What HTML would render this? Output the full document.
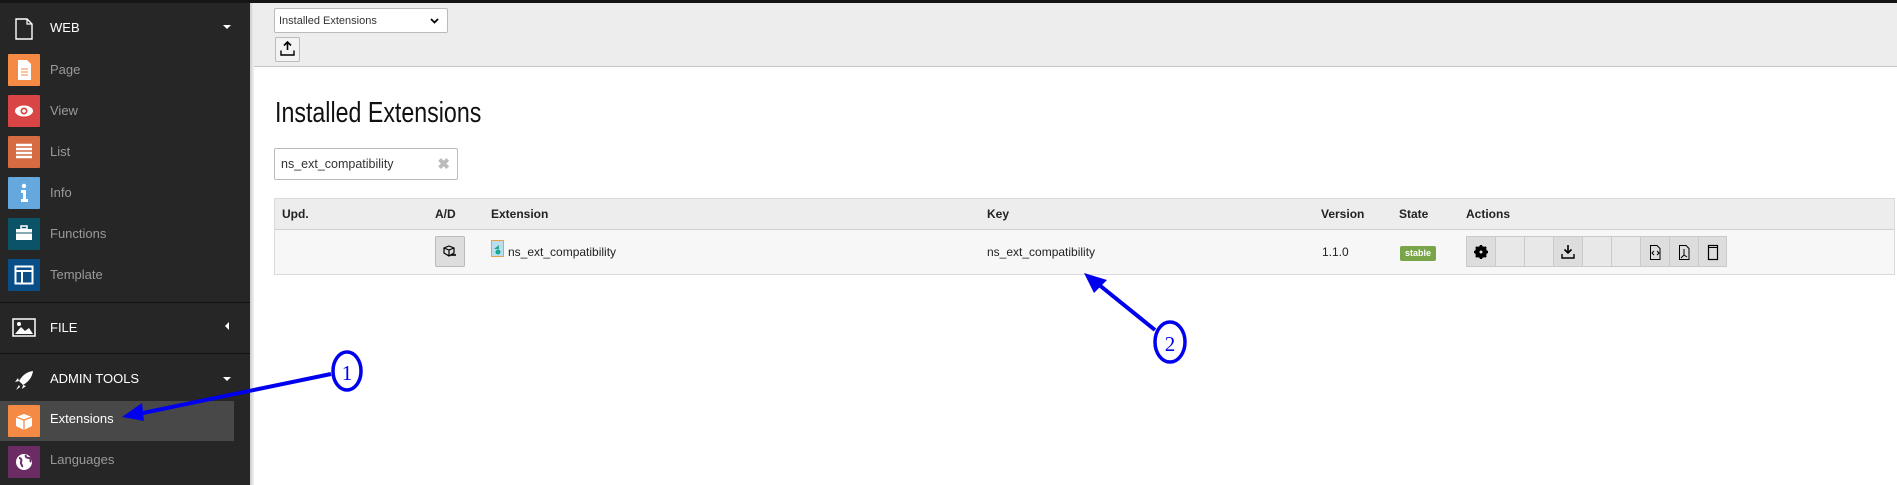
<!DOCTYPE html>
<html><head><meta charset="utf-8"><style>
*{margin:0;padding:0;box-sizing:border-box}
body{width:1897px;height:485px;overflow:hidden;background:#fff;font-family:"Liberation Sans",sans-serif;position:relative}
.abs{position:absolute}
#top{left:0;top:0;width:1897px;height:3px;background:#151515}
#side{left:0;top:3px;width:250px;height:482px;background:#262626}
.hdr{position:absolute;left:50px;color:#fff;font-size:13px}
.ico{position:absolute;left:8px;width:32px;height:32px;border-radius:1px}
.lab{position:absolute;left:50px;color:#9a9a9a;font-size:13px}
.sep{position:absolute;left:0;width:250px;height:1px;background:#111}
.tri{position:absolute;left:223px;width:0;height:0;border-left:4px solid transparent;border-right:4px solid transparent;border-top:4px solid #fff}
#doc{left:250px;top:3px;width:1647px;height:64px;background:#ededed;border-bottom:1px solid #c5c5c5}
#shadow{left:250px;top:3px;width:4px;height:482px;background:linear-gradient(to right,#ccc,#f2f2f2)}
.b{position:absolute;top:236px;height:31px;width:29px;border:1px solid #cacaca;border-right:none}
</style></head><body>
<div class="abs" id="top"></div>
<div class="abs" id="side">
 <svg style="position:absolute;left:14px;top:15px" width="20" height="22" viewBox="0 0 20 22"><path d="M2 1H13L18 6V21H2Z" fill="none" stroke="#fff" stroke-width="1.4"/><path d="M13 1V6H18" fill="none" stroke="#fff" stroke-width="1.2"/></svg>
 <div class="hdr" style="top:17px">WEB</div><div class="tri" style="top:22px"></div>
 <div class="ico" style="top:51px;background:#f58a45"><svg width="32" height="32"><path d="M10 6H19L23 10V26H10Z" fill="#fff"/><path d="M13 15h7M13 18h7M13 21h7" stroke="#f58a45"/></svg></div>
 <div class="lab" style="top:59px">Page</div>
 <div class="ico" style="top:92px;background:#d94545"><svg width="32" height="32"><ellipse cx="16" cy="16" rx="9" ry="5.5" fill="#fff"/><circle cx="16" cy="16" r="3.5" fill="#d94545"/><circle cx="16" cy="16" r="1.8" fill="#fff"/></svg></div>
 <div class="lab" style="top:100px">View</div>
 <div class="ico" style="top:133px;background:#d66b42"><svg width="32" height="32"><path d="M8 9h16M8 13h16M8 17h16M8 21h16" stroke="#fff" stroke-width="2.4"/></svg></div>
 <div class="lab" style="top:141px">List</div>
 <div class="ico" style="top:174px;background:#64a8dd"><svg width="32" height="32"><circle cx="16" cy="9" r="2.2" fill="#fff"/><path d="M13 13h5v9h2v3h-7v-3h2v-6h-2z" fill="#fff"/></svg></div>
 <div class="lab" style="top:182px">Info</div>
 <div class="ico" style="top:215px;background:#0b5366"><svg width="32" height="32"><rect x="8" y="11" width="16" height="11" fill="#fff"/><rect x="13" y="8" width="6" height="3" fill="none" stroke="#fff" stroke-width="1.5"/><path d="M8 15h16" stroke="#0b5366"/></svg></div>
 <div class="lab" style="top:223px">Functions</div>
 <div class="ico" style="top:256px;background:#0a4e87"><svg width="32" height="32"><rect x="7.5" y="7.5" width="17" height="17" fill="none" stroke="#fff" stroke-width="2"/><path d="M8 12h16M14 12v12" stroke="#fff" stroke-width="2"/></svg></div>
 <div class="lab" style="top:264px">Template</div>
 <div class="sep" style="top:299px"></div>
 <svg style="position:absolute;left:12px;top:315px" width="24" height="20"><rect x="1" y="1" width="22" height="17" fill="none" stroke="#fff" stroke-width="1.5"/><path d="M3 16L9 9L13 13L17 10L21 16Z" fill="#fff"/><circle cx="7" cy="6" r="2" fill="#fff"/></svg>
 <div class="hdr" style="top:317px">FILE</div>
 <div style="position:absolute;left:225px;top:319px;border-top:4px solid transparent;border-bottom:4px solid transparent;border-right:4px solid #fff"></div>
 <div class="sep" style="top:350px"></div>
 <svg style="position:absolute;left:14px;top:367px" width="20" height="22" viewBox="0 0 20 22"><path d="M19 1C12 2 8 6 5 11L9 15C14 12 18 8 19 1Z M5 11L1 12L4 8Z M9 15L8 19L12 16Z M5 15L2 20L6 17Z" fill="#fff"/></svg>
 <div class="hdr" style="top:368px">ADMIN TOOLS</div><div class="tri" style="top:374px"></div>
 <div style="position:absolute;left:0;top:398px;width:234px;height:40px;background:#484848"></div>
 <div class="ico" style="top:402px;background:#f58a45"><svg width="32" height="32"><path d="M16 9L24 12V21L16 25L8 21V12Z" fill="#fff"/><path d="M8 12L16 15L24 12M16 15V25" stroke="#f58a45" stroke-width="1.3" fill="none"/></svg></div>
 <div class="hdr" style="top:408px">Extensions</div>
 <div class="ico" style="top:443px;background:#6a2c63"><svg width="32" height="32"><circle cx="16" cy="16" r="8" fill="#fff"/><path d="M11 12c2 0 3 2 2 4s2 3 1 5M18 9c-1 2 1 3 3 3s2 3 1 4" stroke="#6a2c63" stroke-width="2" fill="none"/></svg></div>
 <div class="lab" style="top:449px">Languages</div>
</div>
<div class="abs" id="doc">
 <div style="position:absolute;left:24px;top:5px;width:174px;height:25px;background:#fff;border:1px solid #bbb;border-radius:2px;font-size:11px;color:#333;padding:6px 4px">Installed Extensions
  <svg style="position:absolute;right:8px;top:9px" width="9" height="6"><path d="M1 1L4.5 4.5L8 1" stroke="#000" stroke-width="1.8" fill="none"/></svg></div>
 <div style="position:absolute;left:25px;top:34px;width:25px;height:25px;background:#f3f3f3;border:1px solid #bbb;border-radius:2px">
  <svg width="23" height="23"><path d="M11.5 4V12M8 7.5L11.5 4L15 7.5" stroke="#000" stroke-width="1.6" fill="none"/><path d="M5 12.5V17H18V12.5" stroke="#000" stroke-width="1.4" fill="none"/></svg></div>
</div>
<div class="abs" id="shadow"></div>
<div class="abs" style="left:275px;top:97px;font-size:29px;color:#111;transform:scaleX(0.8);transform-origin:left;white-space:nowrap">Installed Extensions</div>
<div class="abs" style="left:274px;top:148px;width:184px;height:32px;border:1px solid #bbb;border-radius:2px;font-size:12.5px;color:#333;padding:8px 6px">ns_ext_compatibility<span style="position:absolute;right:7px;top:6px;color:#bbb;font-size:15px;font-weight:bold">✖</span></div>
<div class="abs" style="left:274px;top:198px;width:1621px;height:77px;border:1px solid #dadada;background:#f7f7f7">
 <div style="position:absolute;left:0;top:0;width:100%;height:31px;background:#ededed;border-bottom:1px solid #d0d0d0"></div>
 <div style="position:absolute;top:8px;left:0;font-size:12px;font-weight:bold;color:#222">
  <span class="abs" style="left:7px">Upd.</span><span class="abs" style="left:160px">A/D</span><span class="abs" style="left:216px">Extension</span><span class="abs" style="left:712px">Key</span><span class="abs" style="left:1046px">Version</span><span class="abs" style="left:1124px">State</span><span class="abs" style="left:1191px">Actions</span></div>
 <div style="position:absolute;left:160px;top:37px;width:30px;height:31px;background:#ddd;border:1px solid #bbb;border-radius:2px"><svg width="28" height="29"><path d="M13 9L18 11V16L13 19L8 16V11Z M8 11L13 13L18 11M13 13V19" stroke="#000" stroke-width="1.2" fill="none"/><path d="M15 18h5" stroke="#000" stroke-width="1.6"/></svg></div>
 <svg style="position:absolute;left:216px;top:41px" width="13" height="17"><rect x="0.5" y="0.5" width="12" height="16" fill="#bde" stroke="#e8a050"/><path d="M3 9l5-4v4z" fill="#2a8"/><circle cx="7" cy="12" r="2.5" fill="#1a9"/></svg>
 <div style="position:absolute;left:233px;top:46px;font-size:12px;color:#222">ns_ext_compatibility</div>
 <div style="position:absolute;left:712px;top:46px;font-size:12px;color:#222">ns_ext_compatibility</div>
 <div style="position:absolute;left:1047px;top:46px;font-size:12px;color:#222">1.1.0</div>
 <div style="position:absolute;left:1125px;top:47px;width:36px;height:15px;background:#79a548;border-radius:2px;color:#fff;font-size:9px;font-weight:bold;text-align:center;line-height:15px">stable</div>
</div>
<div class="b" style="left:1466px;background:#ddd"><svg width="28" height="29"><circle cx="14" cy="15" r="4.5" fill="none" stroke="#000" stroke-width="3"/><path d="M14 8v14M7 15h14M9 10l10 10M19 10L9 20" stroke="#000" stroke-width="2.4"/><circle cx="14" cy="15" r="1.5" fill="#ddd"/></svg></div>
<div class="b" style="left:1495px;background:#e8e8e8"></div>
<div class="b" style="left:1524px;background:#e8e8e8"></div>
<div class="b" style="left:1553px;background:#ddd"><svg width="28" height="29"><path d="M14 8V16M10.5 12.5L14 16L17.5 12.5" stroke="#000" stroke-width="1.6" fill="none"/><path d="M8 17V21H20V17" stroke="#000" stroke-width="1.4" fill="none"/></svg></div>
<div class="b" style="left:1582px;background:#e8e8e8"></div>
<div class="b" style="left:1611px;background:#e8e8e8"></div>
<div class="b" style="left:1640px;background:#ddd"><svg width="28" height="29"><path d="M9.5 8.5H16L19 11.5V22.5H9.5Z" stroke="#000" fill="none"/><path d="M13 14l-2 2 2 2M16 14l2 2-2 2" stroke="#000" fill="none"/></svg></div>
<div class="b" style="left:1669px;background:#ddd"><svg width="28" height="29"><path d="M9.5 8.5H16L19 11.5V22.5H9.5Z" stroke="#000" fill="none"/><path d="M14 12v6l-3 3M14 18l3 2" stroke="#000" fill="none"/></svg></div>
<div class="b" style="left:1698px;background:#ddd;border-right:1px solid #cacaca"><svg width="28" height="29"><rect x="9.5" y="8.5" width="9" height="14" stroke="#000" stroke-width="1.2" fill="none"/><path d="M9.5 10.5h9" stroke="#000"/></svg></div>
<svg class="abs" style="left:0;top:0" width="1897" height="485">
 <g stroke="#0000ee" fill="none" stroke-width="4"><line x1="331" y1="374" x2="138" y2="414"/><ellipse cx="347" cy="371" rx="14" ry="19" stroke-width="3.5"/>
 <line x1="1155" y1="330" x2="1098" y2="284"/><ellipse cx="1170" cy="342" rx="15" ry="20" stroke-width="3.5"/></g>
 <path d="M122 417L142 403L144 421Z" fill="#0000ee"/>
 <path d="M1084 273L1107 280L1094 293Z" fill="#0000ee"/>
 <text x="347" y="380" font-family="Liberation Serif" font-size="21" fill="#0000ee" text-anchor="middle">1</text>
 <text x="1170" y="351" font-family="Liberation Serif" font-size="21" fill="#0000ee" text-anchor="middle">2</text>
</svg>
</body></html>
